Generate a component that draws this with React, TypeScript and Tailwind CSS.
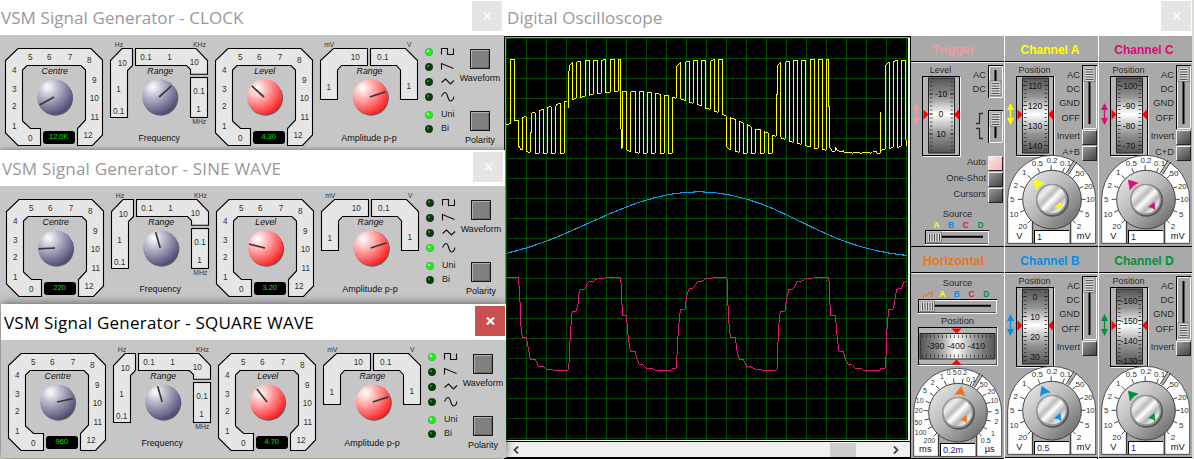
import React from "react";

const SANS = "font-['Liberation_Sans',Arial,sans-serif]";

type Mark = [string, number, number];

function Marks({ items, size = 8.2, fill = "#333", italic = false }: { items: Mark[]; size?: number; fill?: string; italic?: boolean }) {
  return (
    <g fontSize={size} fill={fill} textAnchor="middle" fontStyle={italic ? "italic" : "normal"}>
      {items.map(([t, x, y], i) => (
        <text key={i} x={x} y={y + size * 0.36}>{t}</text>
      ))}
    </g>
  );
}

function CloseButton({ active = false }: { active?: boolean }) {
  return (
    <div className={`flex h-[30px] w-[30px] shrink-0 items-center justify-center ${active ? "bg-[#c75050]" : "bg-[#e5e5e5]"}`}>
      <svg width="9" height="8" viewBox="0 0 9 8">
        <path d="M1 .5 8 7.5M8 .5 1 7.5" stroke={active ? "#fff" : "#f7f7f7"} strokeWidth="2.1" />
      </svg>
    </div>
  );
}

function Knob({ cx, cy, angle, tone }: { cx: number; cy: number; angle: number; tone: "blue" | "red" }) {
  const a = (angle * Math.PI) / 180;
  return (
    <g>
      <circle cx={cx + 0.9} cy={cy + 1.1} r="17.6" fill="#4b4b55" opacity="0.85" />
      <circle cx={cx} cy={cy} r="17.6" fill={`url(#knob-${tone})`} />
      <line x1={cx - 0.6} y1={cy} x2={cx - 0.6 + 16.5 * Math.cos(a)} y2={cy - 16.5 * Math.sin(a)} stroke="#3a3a3a" strokeWidth="1.7" />
    </g>
  );
}

const bezel = { fill: "#e6e6e6", stroke: "#000", strokeWidth: 1.1 };

function RoundGauge({ name, angle, tone, value }: { name: string; angle: number; tone: "blue" | "red"; value: string }) {
  return (
    <svg width="107" height="118" viewBox="0 35 107 118" className="shrink-0">
      <polygon {...bezel} points="18,48.5 91,48.5 102.5,60 102.5,135 92.5,145.5 77.5,145.5 77.5,128.5 85.5,120 85.5,70 81,65.5 27,65.5 22.5,70 22.5,121 30.5,128.5 40.5,128.5 40.5,145.5 18,145.5 5.5,133 5.5,60.5" />
      <Marks items={[["0", 30.3, 138], ["1", 14.2, 125.8], ["2", 14.2, 106], ["3", 14.2, 89], ["4", 14.2, 70], ["5", 30.3, 57], ["6", 49.3, 57], ["7", 70, 57], ["8", 89.3, 60], ["9", 94.2, 80], ["10", 94.2, 98], ["11", 94.8, 117], ["12", 88, 135]]} />
      <Marks items={[[name, 54.8, 71]]} size={8.8} fill="#111" italic />
      <Knob cx={54.6} cy={97} angle={angle} tone={tone} />
      <rect x="43" y="131" width="32" height="13" rx="3" fill="#000" />
      <text x="58.7" y="139.2" fontSize="7.4" fill="#00e000" textAnchor="middle">{value}</text>
    </svg>
  );
}

function FrequencyRange({ angle }: { angle: number }) {
  return (
    <svg width="103" height="118" viewBox="107 35 103 118" className="shrink-0">
      <polygon {...bezel} points="122,48.5 132.5,48.5 132.5,65.5 127.5,70.5 127.5,117.5 110.5,117.5 110.5,60.5" />
      <polygon {...bezel} points="135.5,48.5 196,48.5 207.5,60.5 207.5,74.2 190.5,74.2 190.5,69.5 186.5,65.5 135.5,65.5" />
      <rect {...bezel} x="190.5" y="77.5" width="17" height="40" />
      <Marks items={[["10", 122.3, 63], ["1", 118.5, 89], ["0.1", 118.7, 111], ["0.1", 146, 57], ["1", 169.5, 57], ["10", 194.3, 62], ["0.1", 199, 91], ["1", 198.5, 109]]} />
      <Marks items={[["Hz", 119, 44.5], ["KHz", 199.5, 44.5], ["MHz", 199.3, 121.7]]} size={6.8} />
      <Marks items={[["Range", 160.3, 71]]} size={8.8} fill="#111" italic />
      <Knob cx={159.8} cy={97} angle={angle} tone="blue" />
      <Marks items={[["Frequency", 159.2, 138]]} size={8.8} fill="#111" />
    </svg>
  );
}

function AmplitudeRange() {
  return (
    <svg width="107" height="118" viewBox="317 35 107 118" className="shrink-0">
      <polygon {...bezel} points="333.5,48.5 367.5,48.5 367.5,65.5 341.5,65.5 337.5,70 337.5,99.5 320.5,99.5 320.5,60.5" />
      <polygon {...bezel} points="370.5,48.5 405.5,48.5 417.5,60.5 417.5,99.5 400.5,99.5 400.5,70 396.5,65.5 370.5,65.5" />
      <Marks items={[["10", 355.3, 57], ["1", 328.8, 87], ["0.1", 382.8, 57], ["1", 408.8, 86]]} />
      <Marks items={[["mV", 329.3, 44.5], ["V", 409.3, 44.5]]} size={6.8} />
      <Marks items={[["Range", 369.5, 71]]} size={8.8} fill="#111" italic />
      <Knob cx={370.3} cy={97} angle={18} tone="red" />
      <Marks items={[["Amplitude p-p", 369, 138]]} size={9} fill="#111" />
    </svg>
  );
}

function Led({ on }: { on: boolean }) {
  return (
    <svg width="8" height="8" viewBox="0 0 8 8" className="shrink-0">
      <circle cx="4" cy="4" r="3.7" fill={on ? "#14f514" : "#063f06"} stroke={on ? "#4a9a4a" : "#0a260a"} strokeWidth="0.6" />
      <circle cx="3" cy="3" r="1.2" fill={on ? "#b4ffac" : "#3c7a3c"} />
    </svg>
  );
}

const wavePaths = [
  "M.5 6.5V.5H6.5V6.5H12.5V.5",
  "M.5 6.5V.5L12.5 5.5",
  "M.5 4.5 4.5 1 9.5 6 13 2.5",
  "M.5 3.500C1.500 1.500 2.500-.5 4-.5C7-.5 6.500 8 9.500 8C11.500 8 12.500 6 12.800 3.500",
];

function Leds({ wave }: { wave: number }) {
  return (
    <div className="flex w-[35px] shrink-0 flex-col pl-[1px] pt-[9px]">
      {wavePaths.map((d, i) => (
        <div key={i} className="flex h-[15px] shrink-0 items-center gap-[8px]">
          <Led on={wave === i} />
          <svg width="14" height="8" viewBox="0 0 14 8" className="shrink-0 overflow-visible">
            <path d={d} fill="none" stroke="#111" strokeWidth="1.1" />
          </svg>
        </div>
      ))}
      <div className="mt-[3px] flex h-[15px] shrink-0 items-center gap-[8px] text-[9px] text-[#222]"><Led on />Uni</div>
      <div className="flex h-[14px] shrink-0 items-center gap-[8px] text-[9px] text-[#222]"><Led on={false} />Bi</div>
    </div>
  );
}

function PushButton({ label }: { label: string }) {
  return (
    <div className="flex h-[62px] w-[42px] shrink-0 flex-col items-center text-[9px] leading-[12px] text-[#111]">
      <div className="mb-[3px] h-[20px] w-[20px] shrink-0 border border-[#181818] bg-[#808080] shadow-[inset_1px_1px_0_#b0b0b0,inset_-1px_-1px_0_#686868]" />
      <span className="whitespace-nowrap">{label}</span>
    </div>
  );
}

interface GenProps {
  title: string;
  place: string;
  pad: string;
  active?: boolean;
  centre: string;
  centreAngle: number;
  rangeAngle: number;
  level: string;
  levelAngle: number;
  wave: number;
  titleClass: string;
}

function Generator(p: GenProps) {
  return (
    <section className={`absolute flex h-[154px] flex-col overflow-hidden bg-white ${p.place}`}>
      <header className={`flex h-[36px] shrink-0 items-start justify-between pt-[2px] ${p.active ? "pr-px" : "pr-[2px]"} ${p.pad}`}>
        <h2 className={`flex h-[34px] items-center whitespace-nowrap pl-[1px] font-['Open_Sans',sans-serif] text-[17px] ${p.titleClass} ${p.active ? "text-black" : "text-[#999]"}`}>{p.title}</h2>
        <CloseButton active={p.active} />
      </header>
      <div className={`flex h-[118px] shrink-0 bg-[#c6c6c6] ${p.pad}`}>
        <RoundGauge name="Centre" tone="blue" angle={p.centreAngle} value={p.centre} />
        <FrequencyRange angle={p.rangeAngle} />
        <RoundGauge name="Level" tone="red" angle={p.levelAngle} value={p.level} />
        <AmplitudeRange />
        <Leds wave={p.wave} />
        <div className="flex shrink-0 flex-col pt-[14px]">
          <PushButton label="Waveform" />
          <PushButton label="Polarity" />
        </div>
      </div>
    </section>
  );
}

const yellow =
  "18,285 21,283 31,281 31,88 43,88 43,272 55,270 55,349 58,349 61,358 67,360 67,262 79,260 79,364 85,367 91,367 91,308 94,308 94,254 97,248 106,248 106,370 118,370 118,242 130,238 130,370 142,370 142,232 154,230 154,370 166,370 166,235 169,224 181,220 181,370 193,370 193,214 202,214 205,211 205,233 205,124 208,124 208,106 217,97 217,208 229,205 229,97 241,92 241,202 256,199 256,91 268,91 268,196 280,192 280,91 292,91 292,190 304,190 304,92 316,88 316,187 331,187 331,88 343,88 343,184 355,184 355,88 361,88 361,296 364,296 364,355 367,355 367,184 379,184 379,358 391,367 391,194 394,184 406,184 406,367 418,370 418,184 430,184 430,370 442,370 442,187 454,187 454,370 466,370 466,190 481,193 481,370 493,370 493,196 505,196 505,370 517,370 517,202 529,205 529,112 541,97 541,206 556,212 556,97 568,92 568,217 580,220 580,91 592,91 592,223 604,229 604,91 616,91 616,235 631,238 631,94 643,88 643,244 655,247 655,88 667,88 667,253 679,257 679,349 691,361 691,263 706,268 706,364 718,367 718,275 730,278 730,370 742,370 742,284 754,290 754,370 766,370 766,298 781,298 781,370 793,370 793,305 805,310 805,370 817,370 817,316 829,319 829,194 832,194 832,108 841,97 841,316 844,325 856,328 856,97 868,92 868,334 880,337 880,91 892,91 892,340 904,343 904,91 916,91 916,347 931,350 931,90 943,88 943,355 955,355 955,88 967,88 967,358 979,361 979,88 985,88 985,229 988,229 988,350 997,364 1006,364 1006,352 1012,360 1018,364 1030,366 1030,360 1033,367 1054,367 1057,370 1067,367 1078,367 1081,370 1094,367 1108,367 1111,370 1117,367 1120,364 1129,364 1131,370 1141,370 1141,247 1141,361 1156,358 1156,106 1168,97 1168,355 1180,352 1180,94 1192,91 1192,352 1204,349 1204,91 1216,91 1216,330 1219,330 1219,347";
const pink =
  "18,52 55,52 58,88 58,106 61,136 61,184 67,232 79,232 91,298 106,298 115,319 130,320 138,327 158,328 160,331 205,331 205,310 208,310 208,246 211,240 214,172 217,154 229,154 235,127 235,108 241,88 256,88 262,70 268,64 283,63 292,55 315,55 318,52 361,52 364,76 367,166 379,166 385,236 391,274 405,274 412,300 418,313 430,314 438,325 457,326 466,331 514,331 517,325 529,325 532,267 535,208 541,148 556,148 559,112 567,86 580,84 592,64 607,63 618,55 640,55 642,52 679,52 682,60 685,174 691,232 706,232 712,280 718,298 730,298 740,320 753,320 763,327 783,328 787,331 829,331 832,325 835,208 841,154 856,154 859,118 867,88 880,88 892,64 907,63 918,55 940,55 943,52 985,52 988,70 991,166 1006,166 1012,236 1017,273 1030,274 1037,300 1044,313 1057,314 1066,325 1087,326 1090,331 1140,331 1142,325 1155,325 1158,290 1160,218 1166,148 1180,148 1190,88 1205,85 1210,68 1220,64";

const cols = Array.from({ length: 21 }, (_, i) => 506.5 + i * 20);
const rows = Array.from({ length: 21 }, (_, i) => 38.5 + i * 20);

function Screen() {
  return (
    <svg width="402" height="402" viewBox="506 38 402 402" className="block shrink-0 bg-black" shapeRendering="crispEdges">
      <g stroke="#004b00" strokeWidth="1">
        {cols.map((x) => <line key={x} x1={x} x2={x} y1="38" y2="440" />)}
        {rows.map((y) => <line key={y} x1="506" x2="908" y1={y} y2={y} />)}
      </g>
      <g fill="none">
        <g transform="translate(500 30) scale(.33333)"><polyline points={yellow} stroke="#ff0" strokeWidth="3" /></g>
        <path d="M506 253.5C560 241 588 220 640 202C683 188 718 188 763 204.500C806 221 840 249 907 255.500" stroke="#0a9fe8" strokeWidth="1.100" />
        <g transform="translate(500 260) scale(.33333)"><polyline points={pink} stroke="#e6147c" strokeWidth="3" /></g>
      </g>
    </svg>
  );
}

function Drum({ values, first, x0 = 12 }: { values: string[]; first: number; x0?: number }) {
  const ticks = Array.from({ length: 19 }, (_, i) => 77.5 + ((first + 100 - 77.5) % 4) + i * 4).filter((y) => y < 151);
  return (
    <g>
      <rect x={x0 - 0.5} y="75.500" width="37" height="79" fill="#b5b5b5" stroke="#000" />
      <path d={`M${x0 + 37.5} 76V155.500H${x0}`} stroke="#f4f4f4" fill="none" />
      <rect x={x0 + 5.5} y="77" width="26" height="75" fill="url(#drum-v)" stroke="#222" strokeWidth="1" />
      <g stroke="#222" strokeWidth="0.7">
        {ticks.map((y) => (
          <path key={y} d={`M${x0 + 7} ${y}h2.500M${x0 + 30} ${y}h-2.500`} />
        ))}
        {values.map((v, i) => {
          const y = first + i * 20;
          return y < 152 ? <path key={v} d={`M${x0 + 6} ${y}h4M${x0 + 31} ${y}h-4`} /> : null;
        })}
      </g>
      <svg x="0" y="77" width="93" height="75" viewBox="0 77 93 75">
        <Marks items={values.map((v, i) => [v, x0 + 18, first + i * 20] as Mark)} size={8.6} fill="#151515" />
      </svg>
      <path d={`M${x0 + 0.5} 108.500V118.500L${x0 + 5.5} 113.500ZM${x0 + 36} 108.500V118.500L${x0 + 31} 113.500Z`} fill="#f00" />
    </g>
  );
}

function DrumColumn({ label, values, first, color }: { label: string; values: string[]; first: number; color: string }) {
  return (
    <svg width="52" height="98" viewBox="0 62 52 98" className="shrink-0">
      <Marks items={[[label, 29.5, 69]]} size={9} fill="#2a2a2a" />
      <Drum values={values} first={first} />
      <path d="M5.500 102 9 109H6.200V117H9L5.500 124 2 117H4.800V109H2Z" fill={color} />
    </svg>
  );
}

function VSlider({ height, thumb }: { height: number; thumb: number }) {
  return (
    <svg width="15" height={height} viewBox={`0 0 15 ${height}`} className="shrink-0">
      <rect x=".5" y=".5" width="14" height={height - 1} fill="#a8a8a8" stroke="#000" />
      <path d={`M1.500 ${height - 1.5}V1.500H13M14.500 1V${height - 0.5}H1`} stroke="#f4f4f4" fill="none" />
      <line x1="7.500" x2="7.500" y1="5" y2={height - 5} stroke="#000" strokeWidth="2" />
      <rect x="2" y={thumb} width="11" height="14.500" fill="#d6d6d6" stroke="#555" strokeWidth=".6" />
      <path d={`M3.500 ${thumb + 2.5}h8m-8 2.500h8m-8 2.500h8m-8 2.500h8m-8 2.500h8`} stroke="#444" strokeWidth=".9" />
    </svg>
  );
}

function HSlider({ width }: { width: number }) {
  return (
    <svg width={width} height="15" viewBox={`0 0 ${width} 15`} className="shrink-0">
      <rect x=".5" y=".5" width={width - 1} height="13.500" fill="#a8a8a8" stroke="#000" />
      <path d={`M1.500 13V1.500H${width - 1}M${width - 0.5} 1V14.500H0`} stroke="#f4f4f4" fill="none" />
      <line x1="5" x2={width - 6} y1="6.700" y2="6.700" stroke="#000" strokeWidth="2" />
      <rect x="2" y="2" width="14.500" height="10.500" fill="#d6d6d6" stroke="#555" strokeWidth=".6" />
      <path d="M4.500 3.500v8m2.500-8v8m2.500-8v8m2.500-8v8m2.500-8v8" stroke="#444" strokeWidth=".9" />
    </svg>
  );
}

function SmallButton({ lit = false }: { lit?: boolean }) {
  return (
    <span className={`block h-[15px] w-[15px] shrink-0 border border-r-[#222] border-b-[#222] border-l-[#eee] border-t-[#eee] ${lit ? "bg-[linear-gradient(135deg,#ffe4e4,#f3b4b4)]" : "bg-[linear-gradient(145deg,#999,#444)]"}`} />
  );
}

function Row({ text, lit }: { text: string; lit?: boolean }) {
  return (
    <div className="flex h-[16px] items-center justify-end gap-[2px] whitespace-nowrap">
      <span>{text}</span>
      <SmallButton lit={lit} />
    </div>
  );
}

interface DialProps {
  marks: Mark[];
  units: [string, string];
  value: string;
  color: string;
  pointer: number;
  ticks: number[];
  markSize?: number;
}

function Dial({ marks, units, value, color, pointer, ticks, markSize = 24 }: DialProps) {
  return (
    <div className="relative h-[90px] w-[93px]">
      <svg width="93" height="90" viewBox="300 30 279 270" className="block">
        <path d="M308 298V166A132 132 0 0 1 572 166V298H497V232H382V298Z" fill="#fff" stroke="#333" strokeWidth="2.500" />
        <path d="M383 298V225H497V298Z" fill="#a9a9a9" stroke="#222" strokeWidth="2.500" />
        <path d="M488 89 511 51" stroke="#aaa" strokeWidth="5" />
        <path d="M484 87 507 49M491 91 515 54" stroke="#111" strokeWidth="2.500" />
        <g stroke="#222" strokeWidth="2.500">
          {ticks.map((t) => {
            const a = (t * Math.PI) / 180;
            return <line key={t} x1={440 + 88 * Math.cos(a)} y1={166 - 88 * Math.sin(a)} x2={440 + 102 * Math.cos(a)} y2={166 - 102 * Math.sin(a)} />;
          })}
        </g>
        <Marks items={marks} size={markSize} />
        <Marks items={[[units[0], 343, 276], [units[1], 536, 276]]} size={28} fill="#111" />
        <circle cx="441" cy="167" r="88" fill="url(#dial)" stroke="#444" strokeWidth="3" />
        <circle cx="443" cy="169" r="49" fill="#555" />
        <circle cx="440" cy="166" r="47" fill="#999" />
        <circle cx="440" cy="166" r="42" fill="url(#metal)" />
        <path transform={`rotate(${pointer} 440 166)`} d="M440 88 456 114Q440 108 424 114Z" fill={color} stroke={color} strokeWidth="1.500" />
        <path d="M466 175 468 197Q460 190 449 189Z" fill={color} stroke={color} strokeWidth="1.500" />
      </svg>
      <span className="absolute left-[29px] top-[76px] flex h-[13px] w-[35px] items-center border-l border-t border-black bg-white pl-[2px] text-[9px] leading-none text-[#1c1c8c]">{value}</span>
    </div>
  );
}

const voltMarks: Mark[] = [["20", 353, 247], ["10", 327, 210], ["5", 322, 166], ["2", 332, 124], ["1", 358, 83], ["0.5", 397, 58], ["0.2", 441, 48], ["0.1", 482, 58], ["50", 525, 86], ["20", 550, 125], ["10", 556, 166], ["5", 547, 210], ["2", 522, 247]];
const voltTicks = [225, 202, 180, 157, 135, 114, 91, 68, 45, 22, 0, -22, -45];
const timeMarks: Mark[] = [["200", 355, 251], ["100", 329, 226], ["50", 322, 196], ["20", 323, 161], ["10", 326, 131], ["5", 342, 100], ["2", 365, 76], ["1", 393, 59], ["0.5", 422, 46], ["0.2", 454, 45], ["0.1", 480, 67], ["50", 518, 83], ["20", 541, 102], ["10", 550, 131], ["5", 558, 164], ["2", 556, 194], ["1", 546, 230], ["0.5", 524, 251]];
const timeTicks = [225, 209, 193, 177, 161, 145, 129, 113, 97, 81, 65, 49, 33, 17, 1, -15, -30, -45];

function PanelHeader({ text, color, size = "pr-[3px] text-[12px]" }: { text: string; color: string; size?: string }) {
  return (
    <div className={`flex h-[26px] shrink-0 items-center justify-center border-b border-black bg-[#a9a9a9] pt-[3px] ${size}`}>
      <b className="whitespace-nowrap" style={{ color }}>{text}</b>
    </div>
  );
}

interface ChannelProps {
  name: string;
  color: string;
  values: string[];
  first: number;
  thumb: number;
  sum?: string;
  scale: string;
  pointer: number;
}

function Channel({ name, color, values, first, thumb, sum, scale, pointer }: ChannelProps) {
  return (
    <section className="flex h-[211px] w-[93px] shrink-0 flex-col border-b border-black bg-[#a9a9a9]">
      <PanelHeader text={name} color={color} />
      <div className="flex h-[98px] shrink-0 border-t border-[#eee]">
        <DrumColumn label="Position" values={values} first={first} color={color} />
        <div className="flex w-[40px] shrink-0 flex-col text-[9.300px] text-[#2a2a2a]">
          <div className="flex h-[65px] justify-end gap-[2px] pt-[2px]">
            <div className="flex flex-col items-end pt-[3px] leading-[14.200px]">
              <span>AC</span><span>DC</span><span>GND</span><span>OFF</span>
            </div>
            <VSlider height={64} thumb={thumb} />
          </div>
          <div className="mt-px flex flex-col items-end">
            <Row text="Invert" />
            {sum && <Row text={sum} />}
          </div>
        </div>
      </div>
      <div className="-mt-[6px] shrink-0">
        <Dial marks={voltMarks} units={["V", "mV"]} ticks={voltTicks} value={scale} color={color} pointer={pointer} />
      </div>
    </section>
  );
}

function Letters({ ramp = false }: { ramp?: boolean }) {
  return (
    <div className={`flex h-[10px] items-center justify-center gap-[8.500px] text-[8.500px] font-bold leading-none ${ramp ? "pr-[4px]" : "pl-[2px]"}`}>
      {ramp && <svg width="11" height="7" viewBox="0 0 11 7" className="-mr-[2px]"><path d="M0 6.500 10 .700V6.500" fill="none" stroke="#e8761e" strokeWidth="1.100" /></svg>}
      <span className="text-[#ff0]">A</span>
      <span className="text-[#0a8de6]">B</span>
      <span className="text-[#dc0a78]">C</span>
      <span className="text-[#00913c]">D</span>
    </div>
  );
}

function TriggerPanel() {
  return (
    <section className="flex h-[211px] w-[93px] shrink-0 flex-col border-b border-black bg-[#a9a9a9]">
      <PanelHeader text="Trigger" color="#ee9ca0" size="pr-[8px] text-[12.500px]" />
      <div className="flex h-[93px] shrink-0 border-t border-[#eee]">
        <DrumColumn label="Level" values={["-10", "0", "10"]} first={93} color="#ee9ca0" />
        <div className="flex w-[40px] shrink-0 flex-col gap-[12px] pt-[2px] text-[9.300px] text-[#2a2a2a]">
          <div className="flex justify-end gap-[2px]">
            <div className="flex flex-col items-end pt-[3px] leading-[14.200px]"><span>AC</span><span>DC</span></div>
            <VSlider height={33} thumb={16} />
          </div>
          <div className="flex justify-end gap-[4px]">
            <svg width="8" height="33" viewBox="0 0 8 33"><path d="M0 13.500H3.500V3.500H7M0 18.500H3.500V28.500H7" fill="none" stroke="#333" strokeWidth="1.300" /></svg>
            <VSlider height={33} thumb={2} />
          </div>
        </div>
      </div>
      <div className="flex flex-col pr-px text-[9.300px] text-[#2a2a2a]">
        <Row text="Auto" lit />
        <Row text="One-Shot" />
        <Row text="Cursors" />
      </div>
      <div className="mt-[5px] text-center text-[9.300px] leading-[12px] text-[#2a2a2a]">Source</div>
      <Letters />
      <div className="flex pl-[14px]"><HSlider width={64} /></div>
    </section>
  );
}

function HorizontalPanel() {
  return (
    <section className="flex h-[212px] w-[93px] shrink-0 flex-col border-b border-black bg-[#a9a9a9]">
      <PanelHeader text="Horizontal" color="#e8761e" size="pr-[8px] text-[12.500px]" />
      <div className="border-t border-[#eee] pt-[3px] text-center text-[9.300px] leading-[12px] text-[#2a2a2a]">Source</div>
      <Letters ramp />
      <div className="flex pl-[7px]"><HSlider width={79} /></div>
      <div className="pt-px text-center text-[9.300px] leading-[13px] text-[#2a2a2a]">Position</div>
      <svg width="93" height="40" viewBox="0 328 93 40" className="-mt-px block shrink-0">
        <rect x="7.500" y="328.500" width="78.500" height="37.500" fill="#b5b5b5" stroke="#000" />
        <path d="M86.500 328V366.500H7" stroke="#f4f4f4" fill="none" />
        <rect x="9" y="334.500" width="75" height="25.500" fill="url(#drum-h)" stroke="#222" />
        <g stroke="#222" strokeWidth=".7">
          {Array.from({ length: 18 }, (_, i) => 11.4 + i * 4).map((x) => <path key={x} d={`M${x} 336v3M${x} 358.500v-3`} />)}
        </g>
        <Marks items={[["-390", 24.7, 346.700], ["-400", 45, 346.700], ["-410", 65.300, 346.700]]} size={8.8} fill="#151515" />
        <path d="M40.500 329.500H50.500L45.500 334.500ZM40.500 365.500H50.500L45.500 360.500Z" fill="#f00" />
      </svg>
      <Dial marks={timeMarks} units={["ms", "µs"]} ticks={timeTicks} value="0.2m" color="#e8761e" pointer={8} markSize={21} />
    </section>
  );
}

function Oscilloscope() {
  return (
    <section className="absolute left-[504px] top-0 flex h-[459px] w-[688px] flex-col bg-white">
      <header className="flex h-[36px] shrink-0 justify-between pl-[3px] pr-px pt-px">
        <h2 className="flex h-[34px] items-center whitespace-nowrap font-['Open_Sans',sans-serif] text-[17px] tracking-[0.100px] text-[#999]">Digital Oscilloscope</h2>
        <CloseButton />
      </header>
      <div className="flex h-[423px] shrink-0">
        <div className="flex w-[406px] shrink-0 flex-col border-l border-t border-black bg-[#ededed]">
          <div className="flex border-l border-t border-[#9a9a9a]"><Screen /></div>
          <div className="mt-px flex h-[18px] items-center justify-between border-b-2 border-t border-black bg-[#f0f0f0] pl-[8px] pr-[11px]">
            <svg width="6" height="8" viewBox="0 0 6 8"><path d="M5 .500 1.500 4 5 7.500" fill="none" stroke="#444" strokeWidth="1.800" /></svg>
            <div className="ml-auto mr-[37px] h-[14px] w-[26px] bg-[#cdcdcd]" />
            <svg width="6" height="8" viewBox="0 0 6 8"><path d="M1 .500 4.500 4 1 7.500" fill="none" stroke="#444" strokeWidth="1.800" /></svg>
          </div>
        </div>
        <div className="flex flex-1 gap-px border-l border-black bg-white">
          <div className="flex w-[93px] flex-col border-r border-black"><TriggerPanel /><HorizontalPanel /></div>
          <div className="flex w-[93px] flex-col border-r border-black">
            <Channel name="Channel A" color="#ff0" values={["110", "120", "130", "140"]} first={84.5} thumb={2} sum="A+B" scale="1" pointer={-42} />
            <Channel name="Channel B" color="#0a8de6" values={["0", "10", "20", "30"]} first={84.5} thumb={2} scale="0.5" pointer={-22} />
          </div>
          <div className="flex w-[93px] flex-col">
            <Channel name="Channel C" color="#dc0a78" values={["-100", "-90", "-80", "-70"]} first={84.5} thumb={2} sum="C+D" scale="1" pointer={-42} />
            <Channel name="Channel D" color="#00913c" values={["-160", "-150", "-140", "-130"]} first={88.5} thumb={47} scale="1" pointer={-42} />
          </div>
        </div>
      </div>
    </section>
  );
}

function Gradients() {
  return (
    <svg width="0" height="0" className="absolute">
      <defs>
        <radialGradient id="knob-blue" cx="30%" cy="22%" r="85%">
          <stop offset="0" stopColor="#fff" /><stop offset=".35" stopColor="#b9b9cc" /><stop offset="1" stopColor="#47476f" />
        </radialGradient>
        <radialGradient id="knob-red" cx="28%" cy="25%" r="85%">
          <stop offset="0" stopColor="#fff" /><stop offset=".4" stopColor="#ffa6a6" /><stop offset="1" stopColor="#ff1414" />
        </radialGradient>
        <linearGradient id="drum-v" x1="0" x2="0" y1="0" y2="1">
          <stop offset="0" stopColor="#555" /><stop offset=".25" stopColor="#949494" /><stop offset=".48" stopColor="#fff" /><stop offset=".75" stopColor="#949494" /><stop offset="1" stopColor="#555" />
        </linearGradient>
        <linearGradient id="drum-h">
          <stop offset="0" stopColor="#555" /><stop offset=".25" stopColor="#949494" /><stop offset=".48" stopColor="#fff" /><stop offset=".75" stopColor="#949494" /><stop offset="1" stopColor="#555" />
        </linearGradient>
        <linearGradient id="dial" x1="0" y1="0" x2="1" y2="1">
          <stop offset=".1" stopColor="#e4e4e4" /><stop offset=".5" stopColor="#b4b4b4" /><stop offset="1" stopColor="#5a5a5a" />
        </linearGradient>
        <linearGradient id="metal" x1="0" y1="0" x2="1" y2="1">
          <stop offset="0" stopColor="#aaa" /><stop offset=".25" stopColor="#eee" /><stop offset=".4" stopColor="#bbb" /><stop offset=".52" stopColor="#fff" /><stop offset=".68" stopColor="#b5b5b5" /><stop offset=".82" stopColor="#eee" /><stop offset="1" stopColor="#999" />
        </linearGradient>
      </defs>
    </svg>
  );
}

export default function App() {
  return (
    <main className={`relative h-[459px] w-[1194px] overflow-hidden bg-[#dcdcd2] ${SANS}`}>
      <Gradients />
      <Oscilloscope />
      <Generator title="VSM Signal Generator - CLOCK" titleClass="tracking-[0.080px]" place="left-0 top-[-1px] w-[504px]" pad="pl-0" centre="12.0K" centreAngle={209} rangeAngle={42} level="4.30" levelAngle={138} wave={0} />
      <Generator title="VSM Signal Generator - SINE WAVE" titleClass="tracking-[0.190px]" place="left-0 top-[150px] w-[505px] shadow-[0_-1px_4px_rgba(0,0,0,0.35)]" pad="pl-[1px]" centre="220" centreAngle={183} rangeAngle={106} level="3.20" levelAngle={166} wave={3} />
      <Generator title="VSM Signal Generator - SQUARE WAVE" titleClass="tracking-[0.220px]" active place="left-[1px] top-[304px] w-[505px] shadow-[0_0_9px_rgba(0,0,0,0.6)]" pad="pl-[2px]" centre="960" centreAngle={12} rangeAngle={106} level="4.70" levelAngle={128} wave={0} />
    </main>
  );
}
